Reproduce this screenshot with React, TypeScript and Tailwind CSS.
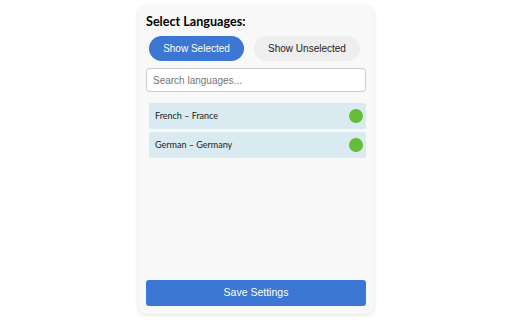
import { useState } from "react";

type Lang = { name: string; selected: boolean };

const languages: Lang[] = [
  { name: "French – France", selected: true },
  { name: "German – Germany", selected: true },
];

export default function App() {
  const [query, setQuery] = useState("");

  return (
    <div className="w-[512px] h-[320px] bg-white flex justify-center pt-[6px]">
      <div className="w-[236px] h-[308px] bg-[#f8f8f8] rounded-lg shadow-[0_1px_4px_rgba(0,0,0,0.12)] px-2 pt-[9px] pb-2 flex flex-col">
        <h2 className="text-[12.6px] font-bold text-black leading-[14px] font-['Lato',sans-serif]">
          Select Languages:
        </h2>
        <div className="flex gap-[10px] mt-[7px] pl-[3px]">
          <button className="w-[95px] h-[25px] rounded-full bg-[#3b77d3] text-white text-[10px] font-['Liberation_Sans',Arial,sans-serif]">
            Show Selected
          </button>
          <button className="w-[106px] h-[25px] rounded-full bg-[#eeeeee] text-[#222] text-[10px] font-['Liberation_Sans',Arial,sans-serif]">
            Show Unselected
          </button>
        </div>
        <input
          className="mt-[7px] h-[24px] w-full border border-[#cfcfcf] rounded-[3px] bg-white px-[6px] text-[10px] placeholder:text-[#757575] font-['Liberation_Sans',Arial,sans-serif] outline-none"
          placeholder="Search languages..."
          value={query}
          onChange={(e) => setQuery(e.target.value)}
        />
        <div className="mt-[11px] pl-[3px] flex flex-col gap-[3px]">
          {languages.map((l) => (
            <div
              key={l.name}
              className="h-[26px] bg-[#d9ebf0] rounded-[2px] flex items-center justify-between pl-[6px] pr-[3px]"
            >
              <span className="text-[9px] text-[#222] font-['Lato',sans-serif]">{l.name}</span>
              {l.selected && <span className="w-[14px] h-[14px] rounded-full bg-[#66bb38]" />}
            </div>
          ))}
        </div>
        <button className="mt-auto h-[26px] w-full rounded-[3px] bg-[#3b77d3] text-white text-[10.5px] font-['Liberation_Sans',Arial,sans-serif]">
          Save Settings
        </button>
      </div>
    </div>
  );
}
